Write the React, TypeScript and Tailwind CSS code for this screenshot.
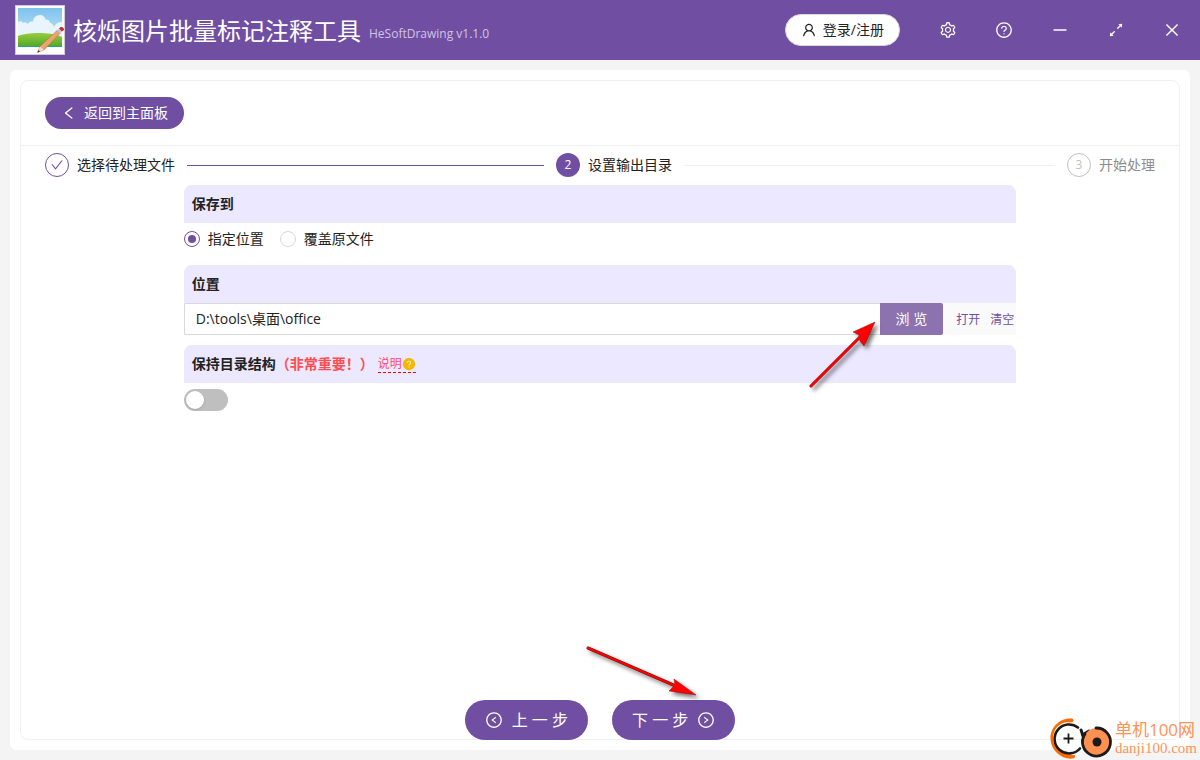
import React, { useState } from 'react';
import {
  AiFillQuestionCircle,
  AiOutlineArrowsAlt,
  AiOutlineCheck,
  AiOutlineClose,
  AiOutlineLeft,
  AiOutlineLeftCircle,
  AiOutlineMinus,
  AiOutlineQuestionCircle,
  AiOutlineRightCircle,
  AiOutlineSetting,
  AiOutlineUser,
} from 'react-icons/ai';

const windowActions = [
  { label: '设置', icon: AiOutlineSetting },
  { label: '帮助', icon: AiOutlineQuestionCircle },
  { label: '最小化', icon: AiOutlineMinus },
  { label: '最大化', icon: AiOutlineArrowsAlt },
  { label: '关闭', icon: AiOutlineClose },
];

const targets = [
  { value: 'custom', label: '指定位置' },
  { value: 'overwrite', label: '覆盖原文件' },
];

const AppLogo = () => (
  <svg className="h-[50px] w-[50px] shrink-0" viewBox="0 0 50 50" aria-hidden="true">
    <defs>
      <linearGradient id="sky" x1="0" y1="0" x2="0" y2="1">
        <stop offset="0" stopColor="#7fc3ec" />
        <stop offset="1" stopColor="#d3ecf9" />
      </linearGradient>
      <linearGradient id="hill" x1="0" y1="0" x2="0" y2="1">
        <stop offset="0" stopColor="#97cc3a" />
        <stop offset="1" stopColor="#4fa62c" />
      </linearGradient>
      <linearGradient id="wood" x1="0" y1="0" x2="1" y2="1">
        <stop offset="0" stopColor="#f7c795" />
        <stop offset="1" stopColor="#dd8047" />
      </linearGradient>
    </defs>
    <rect x="0.5" y="0.5" width="49" height="49" fill="#fdfdfd" stroke="#cfcbd6" />
    <rect x="3" y="3" width="44" height="39" fill="url(#sky)" />
    <path
      d="M3 17c2-1 4-1 5 1 2-1 4 0 5 1 1-2 3-3 5-2 0-4 3-7 7-7 3 0 5 2 6 5 2-1 4 1 4 3 2 0 3 2 4 4 2-4 5-5 8-5v18H3z"
      fill="#e9f5fc"
    />
    <path d="M3 31c10-4 34-4 44 1v10H3z" fill="url(#hill)" />
    <path d="M3 41h44v1H3z" fill="#2aa37e" />
    <path d="M22.500 47.500l2.500-6L42 25.500l3 3L29 45z" fill="url(#wood)" stroke="#b96a3c" strokeWidth=".5" />
    <path d="M22.500 47.500l2.500-6 4 3.500z" fill="#f5dcbc" />
    <path d="M22.500 47.500l1-2.500 1.500 1.500z" fill="#333" />
    <path d="M42 25.500l2-2 3 3-2 2z" fill="#b8c6d6" />
    <path d="M44 23.500l1.500-1.500c2-.5 4 1 3.500 3L47 26.500z" fill="#c92a2a" />
  </svg>
);

const PointerArrow = ({
  className,
  shaft,
  head,
}: {
  className: string;
  shaft: string;
  head: string;
}) => (
  <svg
    className={`pointer-events-none absolute overflow-visible drop-shadow-[3px_3px_2px_rgba(0,0,0,0.55)] ${className}`}
    aria-hidden="true"
  >
    <path d={shaft} stroke="#6d1010" strokeWidth="3" strokeLinecap="round" />
    <path d={head} fill="#f00" stroke="#8a1010" strokeWidth=".5" />
    <path d={shaft} stroke="#f00" strokeWidth="2.400" strokeLinecap="round" />
  </svg>
);

const SectionTitle = ({ children }: { children: React.ReactNode }) => (
  <h2 className="flex h-[38px] items-center rounded-t-lg bg-[#ebe8ff] px-2 font-bold">{children}</h2>
);

const Watermark = () => (
  <div className="pointer-events-none absolute right-0 bottom-0 flex items-center gap-0.5 pr-[3px]">
    <svg className="h-11 w-16" viewBox="0 0 64 44" fill="none" aria-hidden="true">
      <path
        d="M22 2.500C10 2 1 12 1.500 23c.5 12 12 21 22.500 19.500 2-.5 2.500-2 1.500-3.500C14 40 4 33 4 22.500 4 13.500 10 7.500 16 6.500c3-.5 6 .5 8-1 1.500-1.500 0-3-2-3z"
        fill="#ff6a00"
      />
      <path d="M29 11.500a14.500 14.500 0 1 0 2 21" stroke="#1d1a1b" strokeWidth="2.600" strokeLinecap="round" />
      <path d="M19.500 17.500v10M14.500 22.500h10" stroke="#1d1a1b" strokeWidth="1.800" />
      <path d="M32 14c1 2 1 4 2 6M35 18l5-3" stroke="#1d1a1b" strokeWidth="3" strokeLinecap="round" />
      <circle cx="48" cy="26" r="14" fill="#ff9150" />
      <path d="M47 12a14 14 0 1 1-11 6" stroke="#1d1a1b" strokeWidth="2.800" strokeLinecap="round" />
      <circle cx="48" cy="26" r="4.500" fill="#1d1a1b" />
    </svg>
    <div className="flex flex-col text-[#ff9258]">
      <span className="text-[17px] leading-5">单机100网</span>
      <span className="font-['Liberation_Serif','Noto_Sans_CJK_SC',serif] text-[15px] leading-4">danji100.com</span>
    </div>
  </div>
);

export default function App() {
  const [target, setTarget] = useState('custom');
  const [path, setPath] = useState('D:\\tools\\桌面\\office');
  const [keepTree, setKeepTree] = useState(false);

  return (
    <div className="relative flex min-h-screen flex-col bg-[#f4f4f4] font-['Open_Sans','Noto_Sans_CJK_SC',sans-serif] text-sm text-[#222]">
      <header className="flex h-[60px] items-center bg-[#704fa2] pr-[19px] pl-[15px] text-white">
        <AppLogo />
        <h1 className="mt-0.5 ml-2 text-2xl">核烁图片批量标记注释工具</h1>
        <span className="mt-2 ml-2 text-xs text-[#d0c4e2]">HeSoftDrawing v1.1.0</span>
        <button className="ml-auto flex h-8 items-center gap-1.5 rounded-full border border-[#d9d9d9] bg-white px-[15px] text-[#222]">
          <AiOutlineUser className="h-4 w-4" />
          登录/注册
        </button>
        <div className="ml-[39px] flex gap-[38px]">
          {windowActions.map(({ label, icon: Icon }) => (
            <button key={label} aria-label={label}>
              <Icon className="h-[18px] w-[18px]" />
            </button>
          ))}
        </div>
      </header>

      <main className="m-2.5 flex flex-1 flex-col rounded-md bg-white p-2.5">
        <div className="flex flex-1 flex-col rounded-lg border border-[#f0f0f0]">
          <div className="border-b border-[#f0f0f0] px-6 py-4">
            <button className="flex h-8 items-center gap-[7px] rounded-full bg-[#704fa2] px-4 text-white">
              <AiOutlineLeft className="h-4 w-4" />
              返回到主面板
            </button>
          </div>

          <div className="flex flex-1 flex-col px-6 pt-[7px]">
            <ol className="flex">
              <li className="flex flex-1 items-center">
                <span className="mr-2 flex h-6 w-6 items-center justify-center rounded-full border border-[#704fa2] text-[#704fa2]">
                  <AiOutlineCheck className="h-3.5 w-3.5" />
                </span>
                选择待处理文件
                <span className="mx-3 h-px flex-1 bg-[#704fa2]" />
              </li>
              <li className="flex flex-1 items-center" aria-current="step">
                <span className="mr-2 flex h-6 w-6 items-center justify-center rounded-full bg-[#704fa2] text-xs text-white">
                  2
                </span>
                设置输出目录
                <span className="mx-3 h-px flex-1 bg-[#f0f0f0]" />
              </li>
              <li className="flex items-center text-[#8c8c8c]">
                <span className="mr-2 flex h-6 w-6 items-center justify-center rounded-full border border-[#bfbfbf] text-xs text-[#bfbfbf]">
                  3
                </span>
                开始处理
              </li>
            </ol>

            <form className="mx-auto mt-2 flex w-3/4 flex-col gap-2.5">
              <section>
                <SectionTitle>保存到</SectionTitle>
                <div className="flex h-8 items-center gap-4">
                  {targets.map((t) => (
                    <label key={t.value} className="flex items-center gap-2">
                      <input
                        type="radio"
                        name="target"
                        checked={target === t.value}
                        onChange={() => setTarget(t.value)}
                        className="h-4 w-4 appearance-none rounded-full border border-[#d9d9d9] bg-white bg-clip-content p-[3px] checked:border-[#704fa2] checked:bg-[#704fa2]"
                      />
                      {t.label}
                    </label>
                  ))}
                </div>
              </section>

              <section>
                <SectionTitle>
                  <label htmlFor="path">位置</label>
                </SectionTitle>
                <div className="flex h-8 bg-[#fafafa]">
                  <input
                    id="path"
                    type="text"
                    value={path}
                    onChange={(e) => setPath(e.target.value)}
                    className="min-w-0 flex-1 rounded-l-xs border border-r-0 border-[#d9d9d9] bg-white px-[11px]"
                  />
                  <div className="relative flex">
                    <button type="button" className="rounded-r-xs bg-[#8c72af] px-4 text-white">
                      浏 览
                    </button>
                    <PointerArrow
                      className="top-5 -left-[70px] h-16 w-16"
                      shaft="M1 63L54 10"
                      head="M65-1L43 9l6 3 1 6 4 5z"
                    />
                  </div>
                  <div className="flex items-center gap-2.5 pt-0.5 pr-0.5 pl-[13px] text-xs text-[#704fa2]">
                    <button type="button">打开</button>
                    <button type="button">清空</button>
                  </div>
                </div>
              </section>

              <section>
                <SectionTitle>
                  <label htmlFor="keep-tree">保持目录结构</label>
                  <span className="text-[#ff4d4f]">（非常重要！）</span>
                  <a
                    href="#help"
                    className="ml-1 flex items-center border-b border-dashed border-[#f00] text-xs font-normal text-[#ff4d6a]"
                  >
                    说明
                    <AiFillQuestionCircle className="h-3.5 w-3.5 text-[#f5b800]" />
                  </a>
                </SectionTitle>
                <input
                  id="keep-tree"
                  type="checkbox"
                  role="switch"
                  checked={keepTree}
                  onChange={() => setKeepTree(!keepTree)}
                  className="mt-1.5 block h-[22px] w-11 appearance-none rounded-full bg-[#bfbfbf] p-0.5 before:block before:h-[18px] before:w-[18px] before:rounded-full before:bg-white before:shadow-sm checked:bg-[#704fa2] checked:before:ml-[22px]"
                />
              </section>
            </form>

            <div className="-mb-px mt-auto flex justify-center gap-6">
              <button className="flex h-10 items-center gap-[9px] rounded-full bg-[#704fa2] px-5 text-base text-white">
                <AiOutlineLeftCircle className="h-[18px] w-[18px]" />
                上 一 步
              </button>
              <div className="relative">
                <button className="flex h-10 items-center gap-[9px] rounded-full bg-[#704fa2] px-5 text-base text-white">
                  下 一 步
                  <AiOutlineRightCircle className="h-[18px] w-[18px]" />
                </button>
                <PointerArrow
                  className="-top-[54px] -left-[26px] h-12 w-28"
                  shaft="M2 2L92 41"
                  head="M110 49L88 33l1 6-6 6z"
                />
              </div>
            </div>
          </div>
        </div>
      </main>

      <Watermark />
    </div>
  );
}
